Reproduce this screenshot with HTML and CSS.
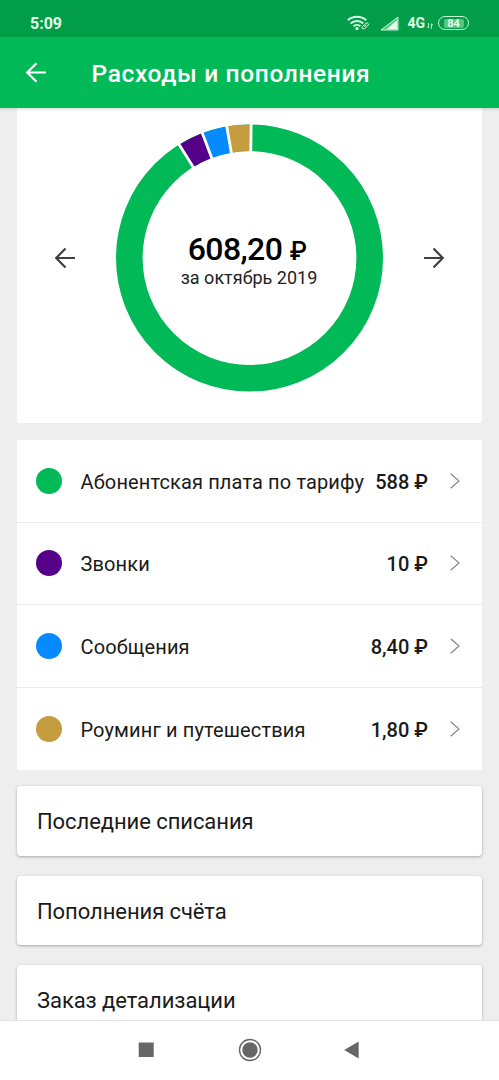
FILE: index.html
```html
<!DOCTYPE html>
<html lang="ru">
<head>
<meta charset="utf-8">
<title>Расходы и пополнения</title>
<link rel="stylesheet" href="styles.css">
</head>
<body>
<div class="screen">
  <div class="status">
    <span class="time">5:09</span>
    <div class="indicators">
      <svg class="wifi" width="23" height="16" viewBox="0 0 23 16" fill="none" stroke="#d9ffe6" stroke-width="2">
        <path d="M.8 5.2a14 14 0 0 1 18.400 0M3.600 8.400a9.600 9.600 0 0 1 12.800 0M6.600 11.300a5 5 0 0 1 6.800 0"/>
        <circle cx="10" cy="13.600" r="1.600" fill="#d9ffe6" stroke="none"/>
        <path d="M15.300 11.600L19 8.300q1.500-.8 2.300.500.400 1.200-.6 2L17.500 13.600q-1.400.800-2.300-.300-.6-1 .1-1.700zM17.200 11.800l2-1.700" stroke="#029d49" stroke-width="3"/>
        <path d="M15.300 11.600L19 8.300q1.500-.8 2.300.500.400 1.200-.6 2L17.500 13.600q-1.400.800-2.300-.300-.6-1 .1-1.700zM17.200 11.800l2-1.700" stroke-width="1"/>
      </svg>
      <svg class="signal" width="19" height="15" viewBox="0 0 19 15">
        <path d="M1 14L18 1v13z" fill="#55c681" stroke="#c8f7d8" stroke-width="1"/>
        <path d="M6.500 13.300L17.200 4v9.300z" fill="#e3ffec"/>
      </svg>
      <span class="network">4G</span>
      <svg class="data" width="6" height="6" viewBox="0 0 6 6" stroke="#b8efca" fill="none"><path d="M1.500 0v5L0 3.500M4.300 6V.8L6 2.300"/></svg>
      <span class="battery"><span class="level">84</span></span>
    </div>
  </div>
  <header class="appbar">
    <svg class="back" width="22" height="22" viewBox="0 0 22 22" fill="none" stroke="#fff" stroke-width="2.200"><path d="M21 10.500H2.500M11.500 1.300L2.200 10.500l9.300 9.200"/></svg>
    <h1 class="title">Расходы и пополнения</h1>
  </header>
  <main class="content">
    <section class="summary">
      <svg class="arrow" width="22" height="22" viewBox="0 0 22 22" fill="none" stroke="#404040" stroke-width="2.200"><path d="M21 11H2.500M11.500 1.500L2.200 11l9.300 9.500"/></svg>
      <div class="donut">
        <svg class="ring" width="268" height="268" viewBox="-133.500 -134 268 268" fill="none" stroke-width="26.600">
          <g transform="rotate(-90)">
            <circle r="120.200" pathLength="360" stroke="#02b958"/>
            <circle r="120.200" pathLength="360" stroke="#550088" stroke-dasharray="11.100 348.900" stroke-dashoffset="-328.100"/>
            <circle r="120.200" pathLength="360" stroke="#058bff" stroke-dasharray="11 349" stroke-dashoffset="-339.200"/>
            <circle r="120.200" pathLength="360" stroke="#c59c3e" stroke-dasharray="10.400 349.600" stroke-dashoffset="-350.200"/>
          </g>
          <g stroke="#fff" stroke-width="2.800">
            <path d="M0-104v-32" transform="rotate(.7)"/>
            <path d="M0-104v-32" transform="rotate(-9.800)"/>
            <path d="M0-104v-32" transform="rotate(-20.700)"/>
            <path d="M0-104v-32" transform="rotate(-31.800)"/>
          </g>
        </svg>
        <div class="total">
          <div class="sum">608,20 <span class="currency">₽</span></div>
          <div class="period">за октябрь 2019</div>
        </div>
      </div>
      <svg class="arrow" width="22" height="22" viewBox="0 0 22 22" fill="none" stroke="#404040" stroke-width="2.200"><path d="M1 11h18.500M10.500 1.500l9.300 9.500-9.300 9.500"/></svg>
    </section>
    <section class="list">
      <div class="row"><i class="dot green"></i><span class="name">Абонентская плата по тарифу</span><b class="amount">588 ₽</b><svg class="chevron" width="10" height="16" viewBox="0 0 10 16"><path d="M.7.700L9 8 .7 15.300"/></svg></div>
      <div class="row"><i class="dot purple"></i><span class="name">Звонки</span><b class="amount">10 ₽</b><svg class="chevron" width="10" height="16" viewBox="0 0 10 16"><path d="M.7.700L9 8 .7 15.300"/></svg></div>
      <div class="row"><i class="dot blue"></i><span class="name">Сообщения</span><b class="amount">8,40 ₽</b><svg class="chevron" width="10" height="16" viewBox="0 0 10 16"><path d="M.7.700L9 8 .7 15.300"/></svg></div>
      <div class="row"><i class="dot gold"></i><span class="name">Роуминг и путешествия</span><b class="amount">1,80 ₽</b><svg class="chevron" width="10" height="16" viewBox="0 0 10 16"><path d="M.7.700L9 8 .7 15.300"/></svg></div>
    </section>
    <div class="card">Последние списания</div>
    <div class="card">Пополнения счёта</div>
    <div class="card">Заказ детализации</div>
  </main>
  <nav class="navbar">
    <svg width="24" height="24" viewBox="0 0 24 24" fill="#666"><path d="M4.700 4.500h15v14.500h-15z"/></svg>
    <svg width="24" height="24" viewBox="0 0 24 24" fill="#666"><circle cx="12" cy="12" r="10.500" fill="none" stroke="#666" stroke-width="1.400"/><circle cx="12" cy="12" r="7.700"/></svg>
    <svg width="24" height="24" viewBox="0 0 24 24" fill="#666"><path d="M2.200 12L16.700 3.500v17z"/></svg>
  </nav>
</div>
</body>
</html>
```
FILE: styles.css
```css
* { box-sizing: border-box; }
body { margin: 0; font-family: Roboto, "Noto Sans", sans-serif; color: #1a1a1a; background: #eee; }
.screen { width: 499px; height: 1080px; display: flex; flex-direction: column; overflow: hidden; }
.status { flex: none; height: 37px; background: #029d49; color: #e0ffea; display: flex; align-items: center; justify-content: space-between; padding: 9px 30px 0; }
.time { font-size: 16px; line-height: 20px; font-weight: 700; padding-top: 1px; }
.indicators { display: flex; align-items: center; height: 20px; }
.signal { margin-left: 10px; }
.network { font-size: 14px; font-weight: 700; margin-left: 8px; line-height: 20px; }
.data { margin: 6px 5px 0 2px; }
.battery { width: 31px; height: 14px; border: 1.500px solid #c8f7d8; border-radius: 7px; display: flex; justify-content: center; align-items: center; }
.level { width: 20px; height: 9px; background: #55c681; border-radius: 2px; font-size: 11px; line-height: 9px; font-weight: 700; text-align: center; }
.appbar { flex: none; height: 71px; background: #02b958; color: #fff; display: flex; align-items: center; padding: 0 0 0 25px; box-shadow: 0 1px 3px rgba(0,80,30,.2); z-index: 1; }
.title { margin: 3px 0 0 44.500px; font-size: 24.500px; font-weight: 500; line-height: 30px; letter-spacing: .65px; white-space: nowrap; }
.content { flex: 1; min-height: 0; overflow: hidden; padding: 0 17px; background: #eee; }
.summary { height: 315px; background: #fff; border-radius: 0 0 4px 4px; display: flex; justify-content: space-between; padding: 16px 37px 0; }
.arrow { margin-top: 123px; }
.donut { display: grid; width: 268px; height: 268px; }
.ring, .total { grid-area: 1 / 1; }
.total { text-align: center; padding: 107px 1px 0 0; color: #000; }
.sum { font-size: 32px; font-weight: 500; line-height: 36px; letter-spacing: -.6px; white-space: nowrap; padding-right: 4px; }
.currency { font-size: 25px; }
.period { font-size: 18px; line-height: 20px; color: #222; margin-top: -2px; }
.list { margin-top: 17px; background: #fff; }
.row { height: 82.500px; border-bottom: 1px solid #ebebeb; display: flex; align-items: center; padding: 0 21px 0 19px; }
.row:last-child { border-bottom: 0; height: 82px; }
.dot { width: 26px; height: 26px; border-radius: 50%; flex: none; margin-right: 18.500px; }
.green { background: #02b958; }
.purple { background: #550088; }
.blue { background: #058bff; }
.gold { background: #c59c3e; }
.name { flex: 1; font-size: 20px; line-height: 24px; letter-spacing: .13px; white-space: nowrap; padding-top: 2px; }
.amount { font-size: 20px; line-height: 24px; font-weight: 500; white-space: nowrap; padding-top: 2px; margin-right: 22px; }
.chevron { flex: none; fill: none; stroke: #888; stroke-width: 1.200; margin-right: 1px; }
.card { height: 69.500px; margin-top: 16.500px; background: #fff; border-radius: 4px; box-shadow: 0 1px 3px rgba(0,0,0,.3); display: flex; align-items: center; padding: 3px 20px 0; font-size: 22px; line-height: 26px; letter-spacing: -.07px; }
.card + .card { margin-top: 20px; }
.navbar { flex: none; height: 60px; background: #fff; border-top: 1px solid #e4e4e4; display: flex; justify-content: space-between; align-items: center; padding: 0 133.500px 1px; z-index: 1; }
```
